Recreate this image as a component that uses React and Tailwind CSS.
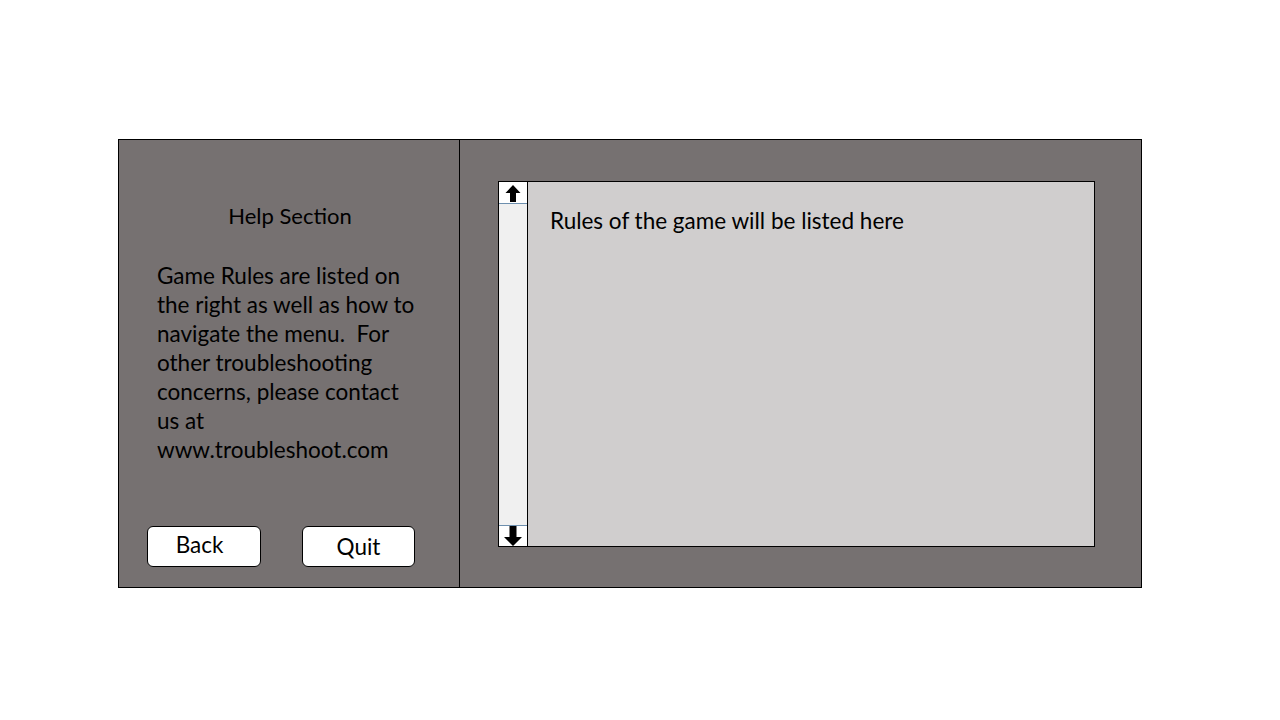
const ArrowUp = () => (
  <svg width="16" height="17" viewBox="0 0 16 17">
    <path d="M8 0 L15.5 8 L11 8 L11 17 L5 17 L5 8 L0.5 8 Z" fill="#000" />
  </svg>
);

const ArrowDown = () => (
  <svg width="18" height="20" viewBox="0 0 18 20">
    <path d="M9 20 L18 11 L12.5 11 L12.5 0 L5.5 0 L5.5 11 L0 11 Z" fill="#000" />
  </svg>
);

const App = () => {
  return (
    <div
      className="w-[1280px] h-[720px] bg-white pt-[139px] pl-[118px]"
      style={{ fontFamily: "Lato, 'Open Sans', sans-serif" }}
    >
      <div className="flex w-[1024px] h-[449px] border border-black bg-[#767171] text-black">
        {/* left panel */}
        <div className="w-[341px] flex flex-col border-r border-black pt-[61px] pb-[20px]">
          <h2 className="text-[22px] leading-[29px] text-center pl-[2px]">Help Section</h2>
          <p className="mt-[31px] ml-[38px] w-[262px] text-[22.5px] leading-[29px]">
            Game Rules are listed on the right as well as how to navigate the menu.&nbsp; For
            other troubleshooting concerns, please contact us at www.troubleshoot.com
          </p>
          <div className="mt-auto flex pl-[28px] gap-[41px]">
            <button className="w-[114px] h-[41px] bg-white border border-black rounded-[6px] text-[22.5px] pb-[3px] pr-[9px]">
              Back
            </button>
            <button className="w-[113px] h-[41px] bg-white border border-black rounded-[6px] text-[22.5px]">
              Quit
            </button>
          </div>
        </div>

        {/* right panel */}
        <div className="flex-1 pt-[41px] pl-[38px] pr-[46px] pb-[40px]">
          <div className="flex h-full bg-[#d0cece] border border-black">
            <div className="w-[29px] flex flex-col bg-[#f0f0f0] border-r border-black">
              <div className="h-[22px] bg-white border-b border-[#6d8fae] flex items-end justify-center pb-[1px]">
                <ArrowUp />
              </div>
              <div className="flex-1" />
              <div className="h-[21px] bg-white border-t border-[#6d8fae] flex items-end justify-center overflow-visible">
                <ArrowDown />
              </div>
            </div>
            <div className="pl-[22px] pt-[24px] text-[22.5px] leading-[29px]">
              Rules of the game will be listed here
            </div>
          </div>
        </div>
      </div>
    </div>
  );
};

export default App;
